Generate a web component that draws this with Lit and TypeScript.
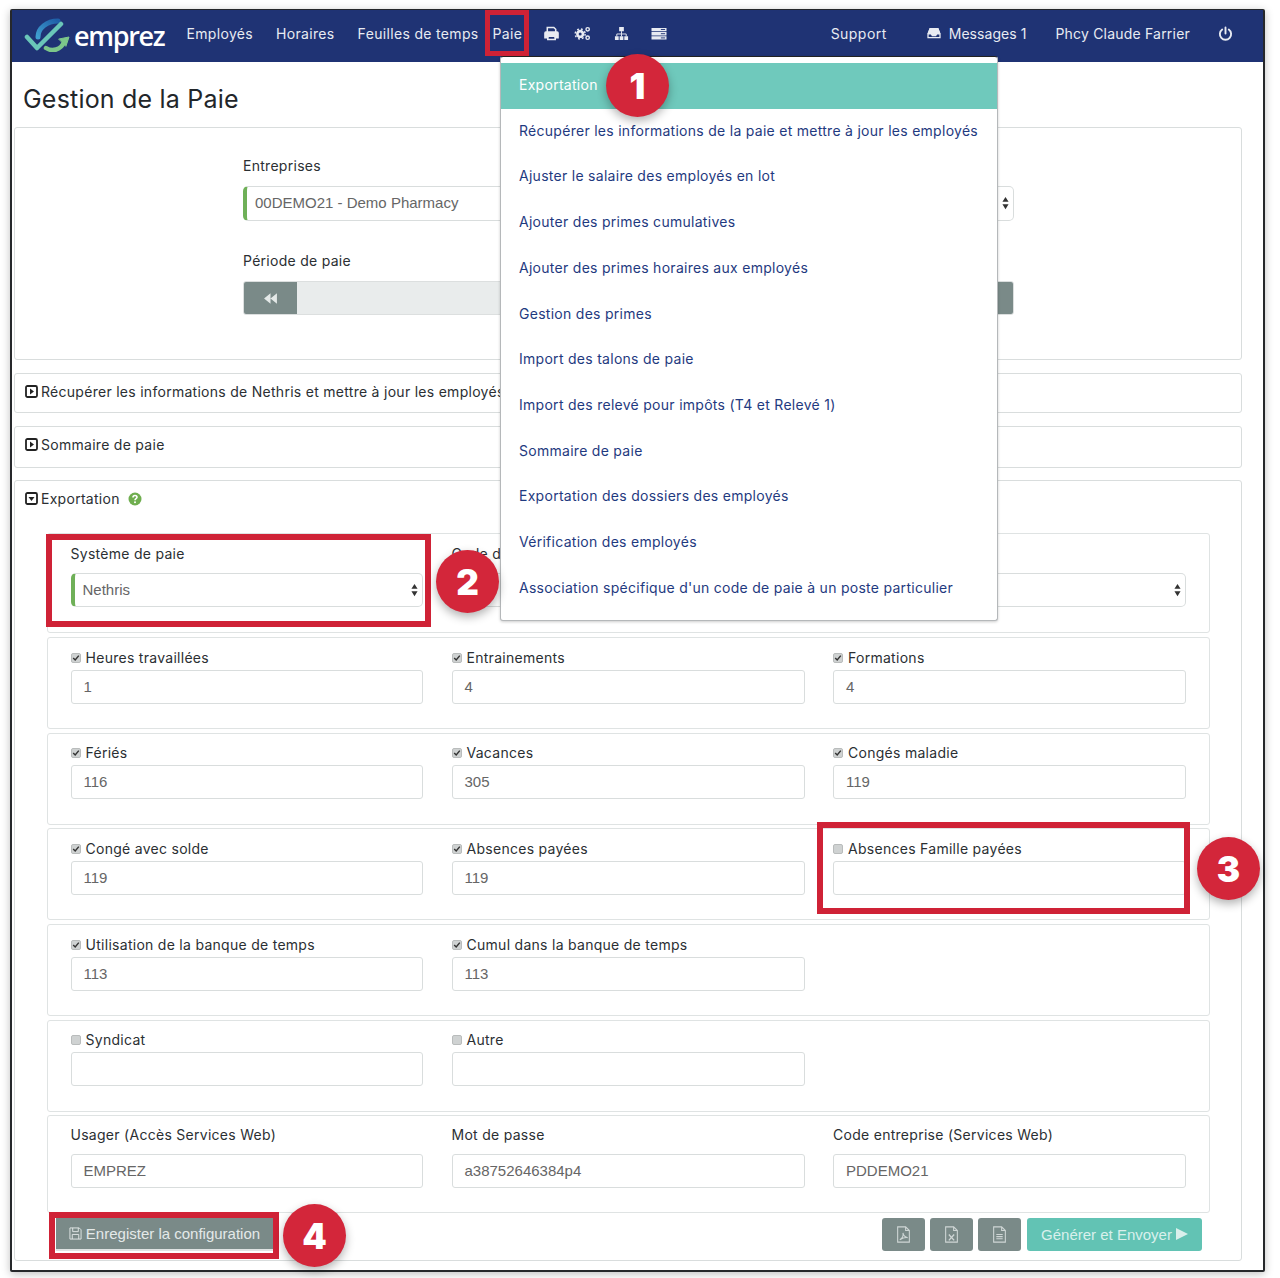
import { LitElement, html, css, svg } from "lit";
import { customElement } from "lit/decorators.js";

const menu = [
  "Récupérer les informations de la paie et mettre à jour les employés",
  "Ajuster le salaire des employés en lot",
  "Ajouter des primes cumulatives",
  "Ajouter des primes horaires aux employés",
  "Gestion des primes",
  "Import des talons de paie",
  "Import des relevé pour impôts (T4 et Relevé 1)",
  "Sommaire de paie",
  "Exportation des dossiers des employés",
  "Vérification des employés",
  "Association spécifique d'un code de paie à un poste particulier",
];

type F = { l: string; v: string; c: boolean };
const rows: F[][] = [
  [{ l: "Heures travaillées", v: "1", c: true }, { l: "Entrainements", v: "4", c: true }, { l: "Formations", v: "4", c: true }],
  [{ l: "Fériés", v: "116", c: true }, { l: "Vacances", v: "305", c: true }, { l: "Congés maladie", v: "119", c: true }],
  [{ l: "Congé avec solde", v: "119", c: true }, { l: "Absences payées", v: "119", c: true }, { l: "Absences Famille payées", v: "", c: false }],
  [{ l: "Utilisation de la banque de temps", v: "113", c: true }, { l: "Cumul dans la banque de temps", v: "113", c: true }],
  [{ l: "Syndicat", v: "", c: false }, { l: "Autre", v: "", c: false }],
];

const arrows = html`<svg class="arrows" viewBox="0 0 8 16" width="7" height="14"><path d="M4 1 7.500 6.500H.5zM4 15 .5 9.500h7z" fill="#333"/></svg>`;

const caretBox = (down: boolean) => html`<svg class="caret" viewBox="0 0 13 13" width="13" height="13">
  <rect x="1" y="1" width="11" height="11" rx="1.500" fill="none" stroke="#222" stroke-width="1.800"/>
  ${down ? svg`<path d="M3.500 5h6L6.500 9z" fill="#222"/>` : svg`<path d="M5 3.500v6L9 6.500z" fill="#222"/>`}
</svg>`;

const fileIcon = (inner: unknown) => html`<svg viewBox="0 0 14 16" width="15" height="17" fill="none" stroke="#cfd6d5" stroke-width="1">
  <path d="M1.500 .8h7.500L12.500 4.300V15.200H1.500zM9 .8v3.500H12.500"/>${inner}</svg>`;

@customElement("app-root")
export class AppRoot extends LitElement {
  static styles = css`
    :host { display: block; position: relative; height: 1278px; box-sizing: border-box; padding: 9px 15px 6px 10px; background: #fff; font-family: "Inter", "Noto Sans", sans-serif; font-size: 14px; letter-spacing: .28px; color: #2b2f33; overflow: hidden; }
    .frame { height: 100%; box-sizing: border-box; border: 2px solid #26282b; border-top-width: 1px; border-radius: 2px; box-shadow: 0 2px 8px rgba(0,0,0,.25); background: #fff; overflow: hidden; }
    nav { height: 52px; background: #1f3374; color: #e8ebf2; display: flex; align-items: center; padding: 0 0 6px 12px; box-sizing: border-box; font-size: 14px; letter-spacing: .33px; }
    .logo { display: flex; align-items: center; margin-right: 22px; padding-top: 5px; }
    .logo svg { margin-top: -2px; }
    .logo span { font-family: "Open Sans", sans-serif; font-size: 27px; font-weight: 600; color: #fff; letter-spacing: -1.300px; margin-left: 4px; line-height: 1; }
    .ni { margin-right: 23px; white-space: nowrap; }
    .ni.f { margin-right: 14px; }
    .ni.p { margin-right: 22px; }
    .ic { display: flex; margin-right: 15px; }
    .ic.w { margin-right: 22.500px; }
    .spacer { flex: 1; }
    .ni.s { margin-right: 40px; letter-spacing: .45px; }
    .msg { display: flex; align-items: center; gap: 8px; margin-right: 29px; white-space: nowrap; letter-spacing: .05px; }
    .ni.u { margin-right: 28px; letter-spacing: .2px; }
    .pw { margin-right: 30px; display: flex; }
    h1 { margin: 0; font-weight: 400; font-size: 25px; line-height: 30px; letter-spacing: .2px; color: #22262a; padding: 22px 0 13px 11px; }
    .panel { border: 1px solid #d9dddd; border-radius: 3px; margin: 0 21px 0 2px; background: #fff; }
    .top { height: 233px; box-sizing: border-box; padding: 28px 227px 0 228px; margin-bottom: 13px; }
    label, .lab { display: block; line-height: 20px; }
    .sel { position: relative; box-sizing: border-box; height: 34px; border: 1px solid #d9dddd; border-radius: 5px; border-left: 4px solid #6fb058; display: flex; align-items: center; padding: 0 0 2px 8px; font-family: "Liberation Sans", sans-serif; font-size: 15px; letter-spacing: 0; color: #666; background: #fff; }
    .arrows { position: absolute; right: 4px; top: 9px; }
    .top .sel { margin: 10px 0 30px; height: 35px; }
    .period { height: 34px; margin-top: 10px; display: flex; border-radius: 3px; background: #e9ecec; border: 1px solid #dcdfdf; box-sizing: border-box; overflow: hidden; }
    .pb { width: 53px; background: #7a8a88; display: flex; align-items: center; justify-content: center; }
    .pb.end { width: 16px; margin-left: auto; }
    .bar { height: 40px; box-sizing: border-box; display: flex; align-items: center; padding: 0 0 3px 10px; gap: 3px; margin-bottom: 13px; white-space: nowrap; }
    .bar.two { height: 42px; margin-bottom: 12px; padding-bottom: 5px; }
    .exp { height: 781px; box-sizing: border-box; padding: 0 31px 0 32px; }
    .exp .h { height: 38px; display: flex; align-items: center; padding-bottom: 3px; box-sizing: border-box; margin: 0 0 14px -22px; gap: 3px; }
    .help { margin-left: 5px; display: flex; }
    .caret { flex: none; }
    .box { border: 1px solid #dfe3e3; border-radius: 3px; box-sizing: border-box; display: grid; grid-template-columns: 352.500px 353px 353px; column-gap: 28.500px; padding: 9.500px 0 0 22.500px; height: 92px; margin-bottom: 3.700px; }
    .box.first { height: 100px; margin-bottom: 4px; padding-top: 10px; }
    .first .wide { grid-column: 2 / span 2; }
    .box.last { height: 98px; margin-bottom: 4.500px; padding-top: 9px; }
    .first .sel { margin-top: 9px; }
    .last .inp { margin-top: 9px; }
    .chk { display: flex; align-items: center; gap: 5px; height: 20px; line-height: 20px; white-space: nowrap; }
    .cb { width: 10px; height: 10px; background: #cfd2d2; border: 1px solid #b9bcbc; box-sizing: border-box; border-radius: 2px; display: flex; flex: none; }
    .inp { height: 34px; box-sizing: border-box; border: 1px solid #d9dddd; border-radius: 3px; margin-top: 2px; padding: 0 12px 1px; display: flex; align-items: center; font-family: "Liberation Sans", sans-serif; font-size: 15px; letter-spacing: 0; color: #666; background: #fff; }
    .foot { display: flex; align-items: center; height: 33px; letter-spacing: 0; }
    .btn { height: 33px; border-radius: 3px; background: #7a8a88; color: #e4e9e8; display: flex; align-items: center; justify-content: center; font-family: "Liberation Sans", sans-serif; font-size: 15px; }
    .save { width: 217px; margin-left: 9px; gap: 4px; border-bottom: 2px solid #dfe3e3; box-sizing: border-box; border-radius: 0; }
    .sq { width: 43px; margin-left: 5px; }
    .sq.a { margin-left: auto; }
    .go { width: 175px; margin: 0 8px 0 6px; background: #62c3b4; gap: 4px; color: #d9f0ec; }
    .menu { position: absolute; left: 500px; top: 56px; width: 498px; height: 565px; box-sizing: border-box; background: #fff; border: 1px solid #b5b8ba; border-top-color: #222; border-radius: 3px; padding-top: 6px; box-shadow: 0 1px 3px rgba(0,0,0,.2); }
    .mi { height: 45.700px; display: flex; align-items: center; padding-left: 18px; color: #1f3a80; font-size: 14px; white-space: nowrap; }
    .mi.on { background: #6fc9bc; color: #fff; height: 46px; padding-bottom: 3px; box-sizing: border-box; margin-bottom: -1.600px; }
    .red { position: absolute; box-sizing: border-box; border: 6px solid #cf2236; }
    .r1 { left: 485px; top: 10px; width: 44px; height: 46px; border-width: 5px; }
    .r2 { left: 46px; top: 534px; width: 385px; height: 93px; }
    .r3 { left: 817px; top: 822px; width: 373px; height: 92px; }
    .r4 { left: 49px; top: 1212px; width: 230px; height: 47px; }
    .badge { position: absolute; width: 63px; height: 63px; border-radius: 50%; background: #d3263a; color: #fff; display: flex; align-items: center; justify-content: center; font-family: "Inter", sans-serif; font-weight: 900; font-size: 35px; letter-spacing: 0; box-shadow: 0 4px 10px rgba(0,0,0,.3); }
    .b1 { left: 606px; top: 54px; }
    .b2 { left: 436px; top: 550px; }
    .b3 { left: 1197px; top: 837px; }
    .b4 { left: 283px; top: 1204px; }
  `;

  field(f: F) {
    return html`<div>
      <div class="chk"><span class="cb">${f.c ? html`<svg viewBox="0 0 10 10" width="8" height="8"><path d="M1.500 5 4 7.500 8.500 2" fill="none" stroke="#333" stroke-width="1.800"/></svg>` : ""}</span>${f.l}</div>
      <div class="inp">${f.v}</div>
    </div>`;
  }

  render() {
    return html`<div class="frame">
      <nav>
        <div class="logo">
          <svg viewBox="0 0 46 34" width="46" height="34" fill="none" stroke-linecap="round" stroke-linejoin="round">
            <defs><linearGradient id="lg" x1="0" y1="1" x2="1" y2="0"><stop offset="0" stop-color="#3f9fd0"/><stop offset="1" stop-color="#1f5fa8"/></linearGradient></defs>
            <path d="M14 19C14 10 23 3 34 3" stroke="url(#lg)" stroke-width="5"/>
            <path d="M3 19 13 30 37 6" stroke="#6ac6b8" stroke-width="4.500"/>
            <path d="M22 30C28 34 37 32 40 24" stroke="#7cc68a" stroke-width="4.500"/>
            <path d="M35 21 45 19 42 28z" fill="#7cc68a" stroke="#7cc68a" stroke-width="1"/>
          </svg>
          <span>emprez</span>
        </div>
        <div class="ni">Employés</div>
        <div class="ni">Horaires</div>
        <div class="ni f">Feuilles de temps</div>
        <div class="ni p">Paie</div>
        <div class="ic"><svg viewBox="0 0 16 16" width="15" height="15" fill="none" stroke="#e8ebf2" stroke-width="1.600"><path d="M3.500 7V1.500h7l2 2V7"/><path d="M1 7.500q0-1 1-1h12q1 0 1 1v5h-3v-2H4v2H1z" fill="#e8ebf2"/><path d="M4 11h8v3.500H4z"/></svg></div>
        <div class="ic w"><svg viewBox="0 0 18 16" width="17" height="15" fill="none" stroke="#e8ebf2"><circle cx="6.500" cy="8.500" r="3" stroke-width="2.800"/><circle cx="6.500" cy="8.500" r="5.300" stroke-width="1.500" stroke-dasharray="2 2.200"/><circle cx="14.500" cy="3.500" r="1.800" stroke-width="1.500"/><circle cx="14.500" cy="12.500" r="1.800" stroke-width="1.500"/></svg></div>
        <div class="ic w"><svg viewBox="0 0 16 16" width="15" height="15" fill="#e8ebf2"><path d="M5.500 1h5v4.500h-5zM1 11h4v4H1zM6 11h4v4H6zM11 11h4v4h-4z"/><path d="M8 5.500V8.500M3 11V8.500H13V11M8 8.500V11" stroke="#e8ebf2" fill="none" stroke-width="1"/></svg></div>
        <div class="ic"><svg viewBox="0 0 16 16" width="16" height="15" fill="#e8ebf2"><path d="M0 2h16v3.500H0zM0 6.500h16V10H0zM0 11h16v3.500H0z"/><path d="M10 3.700h4.500M10 8.200h4.500M10 12.700h4.500" stroke="#1f3374"/></svg></div>
        <div class="spacer"></div>
        <div class="ni s">Support</div>
        <div class="msg"><svg viewBox="0 0 16 14" width="14" height="12" fill="none" stroke="#e8ebf2" stroke-width="1.500"><path d="M1 8 3.500 2h9L15 8v4.500H1zM1 8h4l1 2h4l1-2h4"/><path d="M3.500 2h9L14.500 7.500H11L10 9H6L5 7.500H1.500z" fill="#e8ebf2"/></svg>Messages 1</div>
        <div class="ni u">Phcy Claude Farrier</div>
        <div class="pw"><svg viewBox="0 0 16 16" width="15" height="15" fill="none" stroke="#e8ebf2" stroke-width="2" stroke-linecap="round"><path d="M8 1.500V8M4.500 3.800a6 6 0 1 0 7 0"/></svg></div>
      </nav>

      <h1>Gestion de la Paie</h1>

      <div class="panel top">
        <label>Entreprises</label>
        <div class="sel">00DEMO21 - Demo Pharmacy${arrows}</div>
        <label>Période de paie</label>
        <div class="period">
          <div class="pb"><svg viewBox="0 0 14 12" width="15" height="13" fill="#e4e9e8"><path d="M7 1v10L1 6zM13 1v10L7 6z"/></svg></div>
          <div class="pb end"></div>
        </div>
      </div>

      <div class="panel bar">${caretBox(false)}Récupérer les informations de Nethris et mettre à jour les employés</div>
      <div class="panel bar two">${caretBox(false)}Sommaire de paie</div>

      <div class="panel exp">
        <div class="h">${caretBox(true)}Exportation
          <span class="help"><svg viewBox="0 0 14 14" width="14" height="14"><circle cx="7" cy="7" r="6.500" fill="#6fae4f"/><path d="M5 5.500Q5 3.500 7 3.500T9 5.300C9 6.800 7 6.600 7 8.200" fill="none" stroke="#fff" stroke-width="1.600"/><circle cx="7" cy="10.300" r="1" fill="#fff"/></svg></span>
        </div>

        <div class="box first">
          <div><div class="lab">Système de paie</div><div class="sel">Nethris${arrows}</div></div>
          <div class="wide"><div class="lab">Code de paie</div><div class="sel">${arrows}</div></div>
        </div>

        ${rows.map((r) => html`<div class="box">${r.map((f) => this.field(f))}</div>`)}

        <div class="box last">
          <div><div class="lab">Usager (Accès Services Web)</div><div class="inp">EMPREZ</div></div>
          <div><div class="lab">Mot de passe</div><div class="inp">a38752646384p4</div></div>
          <div><div class="lab">Code entreprise (Services Web)</div><div class="inp">PDDEMO21</div></div>
        </div>

        <div class="foot">
          <div class="btn save"><svg viewBox="0 0 14 14" width="13" height="13" fill="none" stroke="#e4e9e8" stroke-width="1"><path d="M1 1h10l2 2v10H1zM4 1v4h6V1M3.500 13V8h7v5"/></svg>Enregister la configuration</div>
          <div class="btn sq a">${fileIcon(svg`<path d="M3.500 13C6 11.500 7 9 6.500 6.500c.5 2.500 2 4 4.500 4.500-2.500-.5-5 .5-7.500 2z"/>`)}</div>
          <div class="btn sq">${fileIcon(svg`<path d="M4.500 8l5 5.500M9.500 8l-5 5.500" stroke-width="1.300"/>`)}</div>
          <div class="btn sq">${fileIcon(svg`<path d="M4 8h6M4 10h6M4 12h6"/>`)}</div>
          <div class="btn go">Générer et Envoyer<svg viewBox="0 0 12 12" width="12" height="12" fill="#d9f0ec"><path d="M0 0 12 6 0 12z"/></svg></div>
        </div>
      </div>
    </div>

    <div class="menu">
      <div class="mi on">Exportation</div>
      ${menu.map((m) => html`<div class="mi">${m}</div>`)}
    </div>

    <div class="red r1"></div><div class="red r2"></div><div class="red r3"></div><div class="red r4"></div>
    <div class="badge b1">1</div><div class="badge b2">2</div><div class="badge b3">3</div><div class="badge b4">4</div>`;
  }
}
